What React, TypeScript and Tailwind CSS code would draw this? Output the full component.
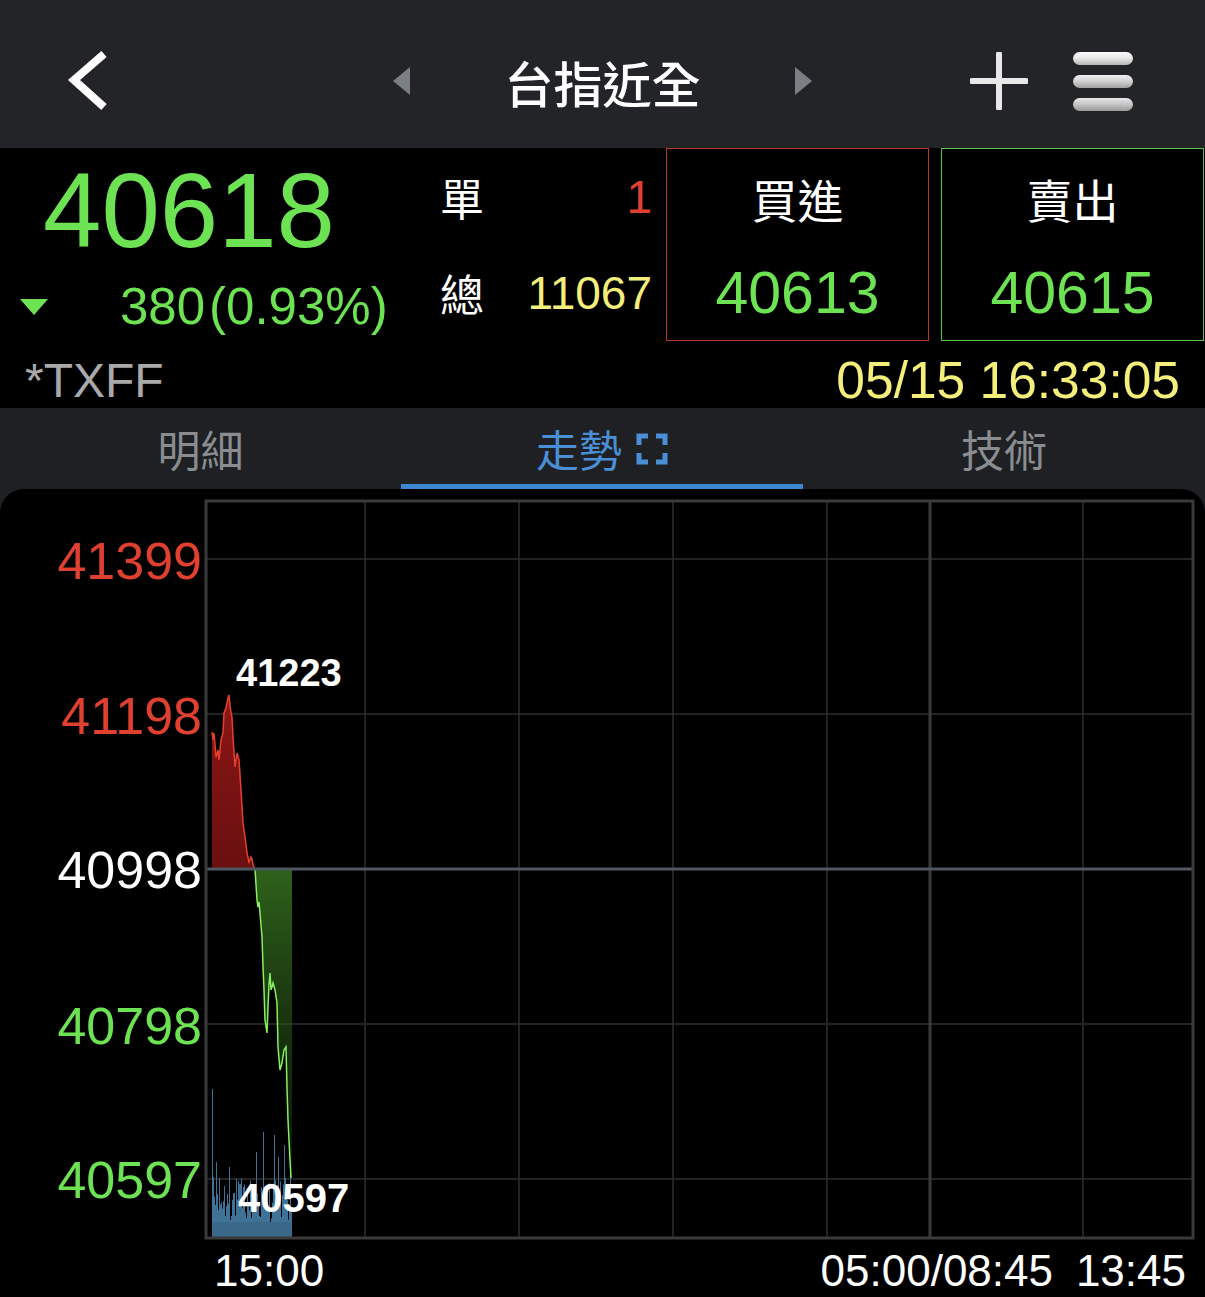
import React from "react";

const GREEN = "#6de354";
const RED = "#e0402f";
const YELLOW = "#f3ef7a";

const redPts: [number, number][] = [
  [212, 732], [213, 740], [214, 733], [216, 757], [218, 750], [219, 760], [221, 740], [223, 733],
  [224, 713], [226, 708], [227, 703], [228, 698], [229, 695], [230, 705], [231, 713], [232, 717],
  [233, 737], [235, 767], [237, 753], [239, 760], [241, 790], [243, 823], [245, 837], [247, 853],
  [249, 862], [251, 857], [252, 859], [253, 865], [255, 869],
];
const greenPts: [number, number][] = [
  [255, 869], [257, 900], [258, 907], [259, 902], [260, 913], [262, 937], [263, 967], [264, 990],
  [265, 1020], [267, 1033], [268, 1007], [269, 985], [270, 973], [271, 990], [272, 987], [273, 983],
  [275, 990], [277, 1003], [278, 1047], [280, 1070], [282, 1063], [284, 1050], [286, 1047], [287, 1087],
  [288, 1120], [290, 1160], [291, 1178],
];

function seeded(n: number) {
  let s = 1234567;
  const out: number[] = [];
  for (let i = 0; i < n; i++) {
    s = (s * 1103515245 + 12345) % 2147483648;
    out.push(s / 2147483648);
  }
  return out;
}

const rnd = seeded(160);
const vols = Array.from({ length: 80 }, (_, i) => {
  let h = 15 + rnd[i] * 45;
  if (i === 0) h = 148;
  if (i === 1) h = 60;
  if (i === 4) h = 75;
  if (i === 17) h = 70;
  if (i === 44) h = 85;
  if (i === 51) h = 105;
  if (i === 62) h = 102;
  if (i === 66) h = 80;
  if (i === 72) h = 92;
  if (i === 78) h = 75;
  return h;
});

const toStr = (p: [number, number][]) => p.map(([x, y]) => `${x},${y}`).join(" ");

function Chart() {
  const vlines = [365, 519, 673, 827, 1083];
  const hlines = [559, 714, 1024, 1179];
  return (
    <svg viewBox="0 489 1205 808" width={1205} height={808} className="block">
      <defs>
        <linearGradient id="gfill" x1="0" y1="869" x2="0" y2="1180" gradientUnits="userSpaceOnUse">
          <stop offset="0" stopColor="#3a7a22" stopOpacity="0.8" />
          <stop offset="1" stopColor="#1b3d10" stopOpacity="0.35" />
        </linearGradient>
        <linearGradient id="rfill" x1="0" y1="695" x2="0" y2="869" gradientUnits="userSpaceOnUse">
          <stop offset="0" stopColor="#8c1616" />
          <stop offset="1" stopColor="#6a0f0f" />
        </linearGradient>
      </defs>
      {vlines.map((x) => (
        <line key={x} x1={x} y1={501} x2={x} y2={1238} stroke="#2f2f2f" strokeWidth={1.5} />
      ))}
      {hlines.map((y) => (
        <line key={y} x1={206} y1={y} x2={1193} y2={y} stroke="#2f2f2f" strokeWidth={1.5} />
      ))}
      <line x1={930} y1={501} x2={930} y2={1238} stroke="#3a3a3a" strokeWidth={3} />
      {vols.map((h, i) => (
        <line key={i} x1={212.5 + i} y1={1237} x2={212.5 + i} y2={1237 - h} stroke="#3f7297" strokeWidth={1} />
      ))}
      <rect x={212} y={1222} width={80} height={15} fill="#3a6888" />
      <polygon points={`${toStr(redPts)} 212,869`} fill="url(#rfill)" />
      <polyline points={toStr(redPts)} fill="none" stroke="#e5402f" strokeWidth={1.5} />
      <polygon points={`${toStr(greenPts)} 292,1180 292,869`} fill="url(#gfill)" />
      <polyline points={toStr(greenPts)} fill="none" stroke="#86f05e" strokeWidth={1.5} />
      <line x1={206} y1={869} x2={1193} y2={869} stroke="#505760" strokeWidth={3} />
      <rect x={206} y={501} width={987} height={737} fill="none" stroke="#3a3a3a" strokeWidth={3} />
      <g fontFamily="'Liberation Sans', Arial, sans-serif" fontSize={52} textAnchor="end">
        <text x={202} y={579} fill={RED}>41399</text>
        <text x={202} y={734} fill={RED}>41198</text>
        <text x={202} y={888} fill="#ffffff">40998</text>
        <text x={202} y={1044} fill={GREEN}>40798</text>
        <text x={202} y={1198} fill={GREEN}>40597</text>
      </g>
      <g fontFamily="'Liberation Sans', Arial, sans-serif" fontWeight={700} fill="#ffffff">
        <text x={236} y={686} fontSize={38}>41223</text>
        <text x={238} y={1212} fontSize={40}>40597</text>
      </g>
      <g fontFamily="'Liberation Sans', Arial, sans-serif" fill="#ffffff" fontSize={44}>
        <text x={214} y={1286}>15:00</text>
        <text x={1053} y={1286} textAnchor="end">05:00/08:45</text>
        <text x={1186} y={1286} textAnchor="end">13:45</text>
      </g>
    </svg>
  );
}

export default function App() {
  const sans = "font-['Liberation_Sans',Arial,sans-serif]";
  const cjk = "font-['Noto_Sans_CJK_TC','Noto_Sans',sans-serif]";
  return (
    <div className={`w-[1205px] h-[1297px] bg-black overflow-hidden ${sans}`}>
      {/* Header */}
      <div className="h-[148px] bg-[#232427] flex items-center pt-[14px]">
        <div className="w-[393px] pl-[66px] flex items-center">
          <svg width="44" height="60" viewBox="0 0 44 60">
            <polyline points="38,3 8,29 38,56" fill="none" stroke="#ffffff" strokeWidth="8" strokeLinejoin="miter" />
          </svg>
        </div>
        <svg width="17" height="28" viewBox="0 0 17 28">
          <polygon points="17,0 0,14 17,28" fill="#7a7f83" />
        </svg>
        <div className={`w-[385px] text-center text-white text-[49px] font-medium leading-none ${cjk}`}>台指近全</div>
        <svg width="17" height="28" viewBox="0 0 17 28">
          <polygon points="0,0 17,14 0,28" fill="#7a7f83" />
        </svg>
        <div className="flex-1" />
        <svg width="58" height="58" viewBox="0 0 58 58">
          <line x1="29" y1="2" x2="29" y2="56" stroke="#e8e8e8" strokeWidth="6" strokeLinecap="round" />
          <line x1="2" y1="29" x2="56" y2="29" stroke="#e8e8e8" strokeWidth="6" strokeLinecap="round" />
        </svg>
        <div className="ml-[45px] mr-[72px] w-[60px] flex flex-col gap-[10px]">
          <div className="h-[13px] rounded-full bg-gradient-to-b from-[#fafafa] via-[#e6e6e6] to-[#b5b5b5]" />
          <div className="h-[13px] rounded-full bg-gradient-to-b from-[#f0f0f0] via-[#cfcfcf] to-[#a0a0a0]" />
          <div className="h-[13px] rounded-full bg-gradient-to-b from-[#e8e8e8] via-[#c4c4c4] to-[#9a9a9a]" />
        </div>
      </div>

      {/* Quote */}
      <div className="h-[193px] flex">
        <div className="w-[420px] flex flex-col">
          <div className="h-[124px] flex items-center pl-[43px] text-[105px] leading-none" style={{ color: GREEN }}>
            40618
          </div>
          <div className="h-[69px] flex items-center">
            <svg width="28" height="16" viewBox="0 0 28 16" className="ml-[20px]">
              <polygon points="0,0 28,0 14,16" fill={GREEN} />
            </svg>
            <span className="ml-[72px] text-[51px] leading-none" style={{ color: GREEN }}>
              380<span className="ml-[4px]">(0.93%)</span>
            </span>
          </div>
        </div>
        <div className="w-[236px] pl-[20px] pr-[4px] flex flex-col">
          <div className="h-[97px] flex items-center justify-between">
            <span className={`text-white text-[44px] leading-none ${cjk}`}>單</span>
            <span className="text-[46px] leading-none" style={{ color: RED }}>1</span>
          </div>
          <div className="h-[96px] flex items-center justify-between">
            <span className={`text-white text-[44px] leading-none ${cjk}`}>總</span>
            <span className="text-[46px] leading-none" style={{ color: YELLOW }}>11067</span>
          </div>
        </div>
        <div className="ml-[10px] w-[263px] h-[193px] border-[1.5px] border-[#b8362b] flex flex-col items-center">
          <div className={`h-[97px] flex items-center text-white text-[46px] leading-none ${cjk}`}>買進</div>
          <div className="h-[94px] flex items-center text-[59px] leading-none" style={{ color: GREEN }}>40613</div>
        </div>
        <div className="ml-[12px] w-[263px] h-[193px] border-[1.5px] border-[#5dc24a] flex flex-col items-center">
          <div className={`h-[97px] flex items-center text-white text-[46px] leading-none ${cjk}`}>賣出</div>
          <div className="h-[94px] flex items-center text-[59px] leading-none" style={{ color: GREEN }}>40615</div>
        </div>
      </div>
      <div className="h-[67px] flex items-center justify-between pl-[25px] pr-[25px] pt-[12px]">
        <span className="text-[48px] leading-none text-[#a9a9a9]">*TXFF</span>
        <span className="text-[51.5px] leading-none" style={{ color: YELLOW }}>05/15 16:33:05</span>
      </div>

      {/* Tabs */}
      <div className="bg-[#1e2024]">
        <div className="h-[81px] flex">
          <div className={`w-[401px] flex items-center justify-center text-[43px] leading-none text-[#8a8d90] ${cjk}`}>
            明細
          </div>
          <div className="w-[402px] flex flex-col">
            <div className="flex-1 flex items-center justify-center gap-[14px] pt-[5px]">
              <span className={`text-[43px] leading-none text-[#4a8fd6] ${cjk}`}>走勢</span>
              <svg width="32" height="32" viewBox="0 0 32 32">
                <path d="M3 12V3h9M20 3h9v9M29 20v9h-9M12 29H3v-9" fill="none" stroke="#4a8fd6" strokeWidth="5" />
              </svg>
            </div>
            <div className="h-[5px] bg-[#3d87d2]" />
          </div>
          <div className={`w-[402px] flex items-center justify-center text-[43px] leading-none text-[#8a8d90] ${cjk}`}>
            技術
          </div>
        </div>
        <div className="bg-black rounded-t-[24px] h-[808px] overflow-hidden">
          <Chart />
        </div>
      </div>
    </div>
  );
}
